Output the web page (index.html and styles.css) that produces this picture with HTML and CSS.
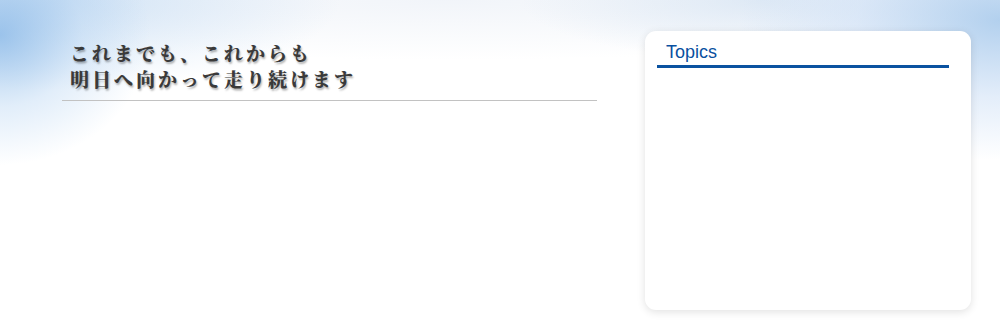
FILE: index.html
```html
<!DOCTYPE html>
<html lang="ja">
<head>
  <meta charset="UTF-8">
  <title>Topics</title>
  <link rel="stylesheet" href="styles.css">
</head>
<body>

<div class="page">
  <div class="main">
    <h2 class="catch">これまでも、これからも<br>明日へ向かって走り続けます</h2>
  </div>

  <div class="topics">
    <h3 class="topics-title">Topics</h3>
    <ul class="topics-list"></ul>
  </div>
</div>

</body>
</html>
```

FILE: styles.css
```css
body {
  margin: 0;
  padding: 0;
  height: 333px;
  overflow: hidden;
  font-family: "Liberation Sans", Arial, sans-serif;
  background:
    radial-gradient(ellipse 150px 130px at 0 35px, rgba(130, 180, 230, 0.75), rgba(170, 205, 240, 0.35) 55%, rgba(255, 255, 255, 0) 100%),
    radial-gradient(ellipse 280px 90px at 60px 0, rgba(180, 210, 240, 0.6), rgba(255, 255, 255, 0) 100%),
    radial-gradient(ellipse 260px 140px at 1000px 20px, rgba(165, 200, 235, 0.85), rgba(200, 220, 245, 0.5) 55%, rgba(255, 255, 255, 0) 100%),
    radial-gradient(ellipse 240px 60px at 760px 0, rgba(205, 222, 240, 0.6), rgba(255, 255, 255, 0) 100%),
    radial-gradient(ellipse 600px 60px at 450px 0, rgba(238, 242, 248, 0.8), rgba(255, 255, 255, 0) 100%),
    #fff;
}

.page {
  display: flex;
  gap: 48px;
  padding: 31px 0 0 62px;
}

/* Catch copy */
.main {
  width: 535px;
}

.catch {
  margin: 9px 0 0;
  padding: 0 0 8px 8px;
  border-bottom: 1px solid #c2c2c2;
  font-family: "Noto Serif CJK JP", "Noto Sans CJK JP", serif;
  font-size: 19px;
  font-weight: 900;
  line-height: 26px;
  letter-spacing: 3px;
  color: #3a3a3a;
  text-shadow: 1px 2px 2px rgba(0, 0, 0, 0.3);
}

/* Topics box */
.topics {
  width: 326px;
  height: 279px;
  box-sizing: border-box;
  padding: 10px 22px 0 12px;
  background: #fff;
  border-radius: 11px;
  box-shadow: 0 2px 8px rgba(0, 0, 0, 0.12);
}

.topics-title {
  margin: 0;
  padding: 0 0 2px 9px;
  font-size: 18px;
  font-weight: normal;
  line-height: 22px;
  color: #0a50a0;
  border-bottom: 3px solid #0a52a0;
}

.topics-list {
  margin: 0;
  padding: 0;
  list-style: none;
}
```
